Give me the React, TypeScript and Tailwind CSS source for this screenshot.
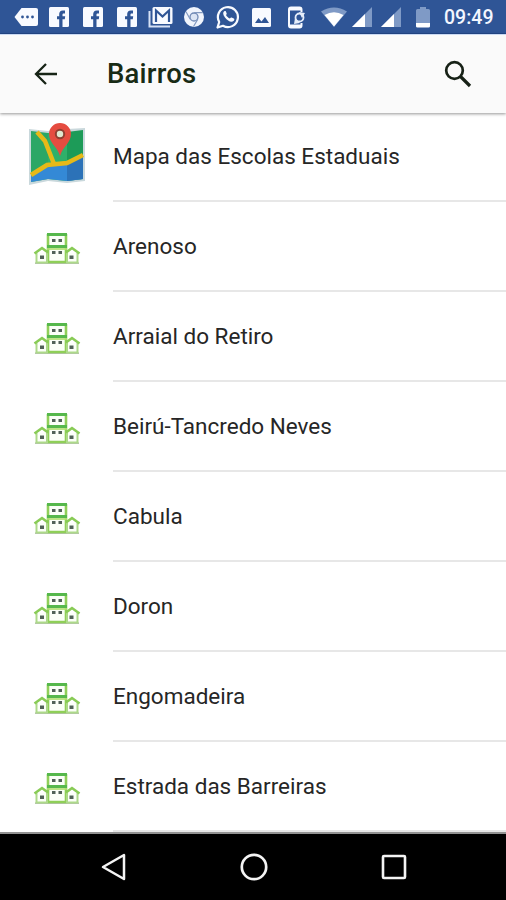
import React from "react";

const places = [
  "Mapa das Escolas Estaduais",
  "Arenoso",
  "Arraial do Retiro",
  "Beirú-Tancredo Neves",
  "Cabula",
  "Doron",
  "Engomadeira",
  "Estrada das Barreiras",
];

function FacebookIcon() {
  return (
    <svg className="ml-[12px] h-[22px] w-[22px] shrink-0" viewBox="0 0 22 22">
      <rect x="1" y="1" width="20" height="20" rx="1.5" fill="#f8faff" />
      <path d="M17 4.5h-2.200c-2.400 0-3.600 1.500-3.600 3.600v2.100H9v3h2.200V21h3.300v-7.800h2.300l.4-3h-2.700V8.600c0-.8.4-1.200 1.200-1.200H17z" fill="#2f5596" />
    </svg>
  );
}

function SignalIcon({ className }: { className: string }) {
  return (
    <svg className={className} viewBox="0 0 20 20">
      <path d="M0 20L20 0V20z" fill="#7f9ac6" />
      <path d="M0 20L13 7V20z" fill="#fff" />
    </svg>
  );
}

function StatusBar() {
  return (
    <div className="flex h-[34px] shrink-0 items-center border-b border-[#24498a] bg-[#2f5596] pl-[14px] pt-px">
      <svg className="h-[22px] w-[25px] shrink-0" viewBox="0 0 25 22">
        <path d="M7.500 2H22q2 0 2 2v14q0 2-2 2H7.500L.5 11z" fill="#f8faff" />
        <circle cx="8.500" cy="11" r="1.400" fill="#2f5596" />
        <circle cx="13.500" cy="11" r="1.400" fill="#2f5596" />
        <circle cx="18.500" cy="11" r="1.400" fill="#2f5596" />
      </svg>
      <div className="-ml-[3px] flex">
        <FacebookIcon />
        <FacebookIcon />
        <FacebookIcon />
      </div>
      <svg className="ml-[10px] h-[22px] w-[26px] shrink-0" viewBox="0 0 26 22">
        <path d="M1.500 5v15.500H22" fill="none" stroke="#d6e1f5" strokeWidth="2" />
        <rect x="4.500" y="1" width="20" height="17" rx="1.500" fill="#f8faff" />
        <path d="M8 16V4.500l6.500 6 6.500-6V16" fill="none" stroke="#2f5596" strokeWidth="2.200" />
      </svg>
      <svg className="ml-[9px] h-[22px] w-[22px] shrink-0" viewBox="0 0 22 22">
        <circle cx="11" cy="11" r="10" fill="#f0f4fc" />
        <circle cx="11" cy="11" r="4" fill="#dce5f4" stroke="#718ab5" strokeWidth="1.300" />
        <path d="M11 6.700h9M7.200 13.200L3 5.800M14.800 13.200L10.500 20.500" stroke="#8299c0" strokeWidth="1.200" />
      </svg>
      <svg className="ml-[11px] h-[24px] w-[24px] shrink-0" viewBox="0 0 24 24">
        <path d="M1.500 22.500L3.200 17A10 10 0 1 1 7 20.800z" fill="#2f5596" stroke="#f8faff" strokeWidth="2.200" strokeLinejoin="round" />
        <path d="M8.200 6.200c-1.500 1.200-1.400 3.500.8 6.300 2.800 3.500 6.500 5.600 8.800 3.200.8-1 .6-1.900 0-2.200l-2.200-1c-.6-.3-1 .1-1.700 1-1.700-.6-3-1.900-3.900-3.500.8-1 .9-1.200.6-1.800l-.8-1.900c-.3-.6-1.100-.5-1.600-.1z" fill="#f8faff" />
      </svg>
      <svg className="ml-[11px] h-[21px] w-[21px] shrink-0" viewBox="0 0 21 21">
        <rect x="1" y="1" width="19" height="19" rx="1.500" fill="#f8faff" />
        <path d="M4 16l3.500-5 3 3.500 3.500-4.500 4 6z" fill="#2f5596" />
      </svg>
      <svg className="ml-[15px] h-[23px] w-[20px] shrink-0" viewBox="0 0 20 23">
        <path d="M14.500 6V3.500c0-1.200-.8-2-2-2H4c-1.200 0-2 .8-2 2v16c0 1.200.8 2 2 2h8.500c1.200 0 2-.8 2-2V17" fill="none" stroke="#f8faff" strokeWidth="2" />
        <path d="M2 3h12M2 20h12" stroke="#f8faff" strokeWidth="3" />
        <circle cx="12.500" cy="11.500" r="4" fill="none" stroke="#e5edfa" strokeWidth="1.800" />
        <path d="M12 6l6 1-3 5zM8 12l5 5-6 1z" fill="#e5edfa" />
      </svg>
      <svg className="ml-[14px] h-[20px] w-[26px] shrink-0" viewBox="0 0 26 20">
        <path d="M0 4.500Q13-3.500 26 4.500L13 20z" fill="#7f9ac6" />
        <path d="M3.500 8Q13 2.500 22.500 8L13 19.500z" fill="#fff" />
      </svg>
      <SignalIcon className="ml-[5px] h-[20px] w-[20px] shrink-0" />
      <SignalIcon className="ml-[9px] h-[20px] w-[20px] shrink-0" />
      <svg className="ml-[15px] h-[22px] w-[14px] shrink-0" viewBox="0 0 14 22">
        <path d="M4 1h6v2h2.500q1.500 0 1.500 1.500V21H0V4.500Q0 3 1.500 3H4z" fill="#7f9ac6" />
        <path d="M0 17h14v3q0 1.500-1.500 1.500h-11Q0 21.500 0 20z" fill="#fff" />
      </svg>
      <span className="ml-[14px] mt-[2px] whitespace-nowrap text-[19.500px] font-medium leading-none text-[#f3f7ff]">09:49</span>
    </div>
  );
}

function MapIcon() {
  return (
    <svg className="h-[64px] w-[58px]" viewBox="0 0 58 64">
      <path d="M1 7L20 9 39 7 57 6V59L39 61 20 59 1 63z" fill="#c9d8dc" />
      <path d="M3 9l17 2v46L3 60z" fill="#2ba766" />
      <path d="M20 11l19-2v50l-19-2z" fill="#2fb06a" />
      <path d="M39 10l16-2v49l-16 2z" fill="#1d9b58" />
      <path d="M3 54l17-11 19-2 16-8v24l-16 2-19-2-17 3z" fill="#3489d6" />
      <path d="M39 41l16-8v24l-16 2z" fill="#2c72b8" />
      <path d="M3 53L19 43 39 41 55 33M9 10l8 9 9 23" fill="none" stroke="#e7b918" strokeWidth="4.500" />
      <path d="M32 34C29 24 21 21 21 12a11 11 0 0 1 22 0c0 9-8 12-11 22z" fill="#e54c40" />
      <circle cx="32" cy="12" r="4.200" fill="#dfe8d0" stroke="#8f3f31" strokeWidth="2" />
    </svg>
  );
}

function SchoolIcon() {
  return (
    <svg className="h-[34px] w-[48px]" viewBox="0 0 48 34">
      <path d="M2 31.200h44" stroke="#9eaa98" strokeWidth="1.300" />
      <path d="M15 2v28h18V2" fill="#fbfff8" stroke="#8fcf58" strokeWidth="2.600" />
      <path d="M14 2.500h20M14 14.500h20" stroke="#56b84c" strokeWidth="3" />
      <path d="M14 17h20" stroke="#b2df72" strokeWidth="1.700" />
      <path d="M3.500 21v9.500H14V21M34 21v9.500h10.500V21" fill="#fbfff8" stroke="#add98a" strokeWidth="2" />
      <path d="M1.500 21.500L9 16l6 4.500M33 20.500l6-4.500 7.500 5.500" fill="none" stroke="#88cb55" strokeWidth="2.600" />
      <path d="M19 7h3.500v3H19zm6.500 0H29v3h-3.500zM19 19h3.500v3H19zm6.500 0H29v3h-3.500zM7 23.500h4v3.500H7zm29.500 0h4v3.500h-4z" fill="#516257" />
    </svg>
  );
}

export default function App() {
  return (
    <div className="flex h-[900px] w-[506px] flex-col overflow-hidden bg-white font-['Roboto',sans-serif]">
      <StatusBar />
      <header className="relative z-10 flex h-[79px] shrink-0 items-center border-t border-[#cbdaf3] bg-[#fafafa] shadow-[0_1px_3px_rgba(0,0,0,0.42)]">
        <svg aria-label="Voltar" className="ml-[34px] h-[24px] w-[24px]" viewBox="0 0 24 24" fill="none" stroke="#172416" strokeWidth="2.300">
          <path d="M23 12H2M12 2L2 12l10 10" />
        </svg>
        <h1 className="ml-[49px] whitespace-nowrap text-[27.500px] font-medium leading-8 tracking-[0.2px] text-[#182b15]">Bairros</h1>
        <svg aria-label="Pesquisar" className="ml-auto mr-[34px] h-[28px] w-[28px]" viewBox="0 0 28 28" fill="none" stroke="#172116" strokeWidth="2.700">
          <circle cx="10.500" cy="10.500" r="8.300" />
          <path d="M16.500 16.500L26 26" strokeWidth="3.200" />
        </svg>
      </header>
      <main className="-mt-px shrink-0">
        {places.map((name, index) => (
          <div key={name} className="flex h-[90px]">
            <div className="flex w-[113px] shrink-0 items-center pl-[28px]">
              {index === 0 ? <div className="-mt-[6px]"><MapIcon /></div> : <div className="ml-[5px] mt-[3px]"><SchoolIcon /></div>}
            </div>
            <div className="flex flex-1 items-center border-b-2 border-[#e7e7e7] pb-px">
              <span className="whitespace-nowrap text-[22.500px] leading-7 text-[#262626]">{name}</span>
            </div>
          </div>
        ))}
      </main>
      <nav className="flex flex-1 items-center border-t-2 border-[#929292] bg-black pl-[101px]">
        <svg className="h-[28px] w-[25px]" viewBox="0 0 25 28" fill="none" stroke="#f4f4f4" strokeWidth="2.500">
          <path d="M2 14L23 2v24z" strokeLinejoin="round" />
        </svg>
        <svg className="ml-[114px] h-[28px] w-[28px]" viewBox="0 0 28 28" fill="none" stroke="#f4f4f4" strokeWidth="2.700">
          <circle cx="14" cy="14" r="12.200" />
        </svg>
        <svg className="ml-[113px] h-[26px] w-[26px]" viewBox="0 0 26 26" fill="none" stroke="#f4f4f4" strokeWidth="2.600">
          <rect x="2" y="2" width="22" height="22" rx="1" />
        </svg>
      </nav>
    </div>
  );
}
